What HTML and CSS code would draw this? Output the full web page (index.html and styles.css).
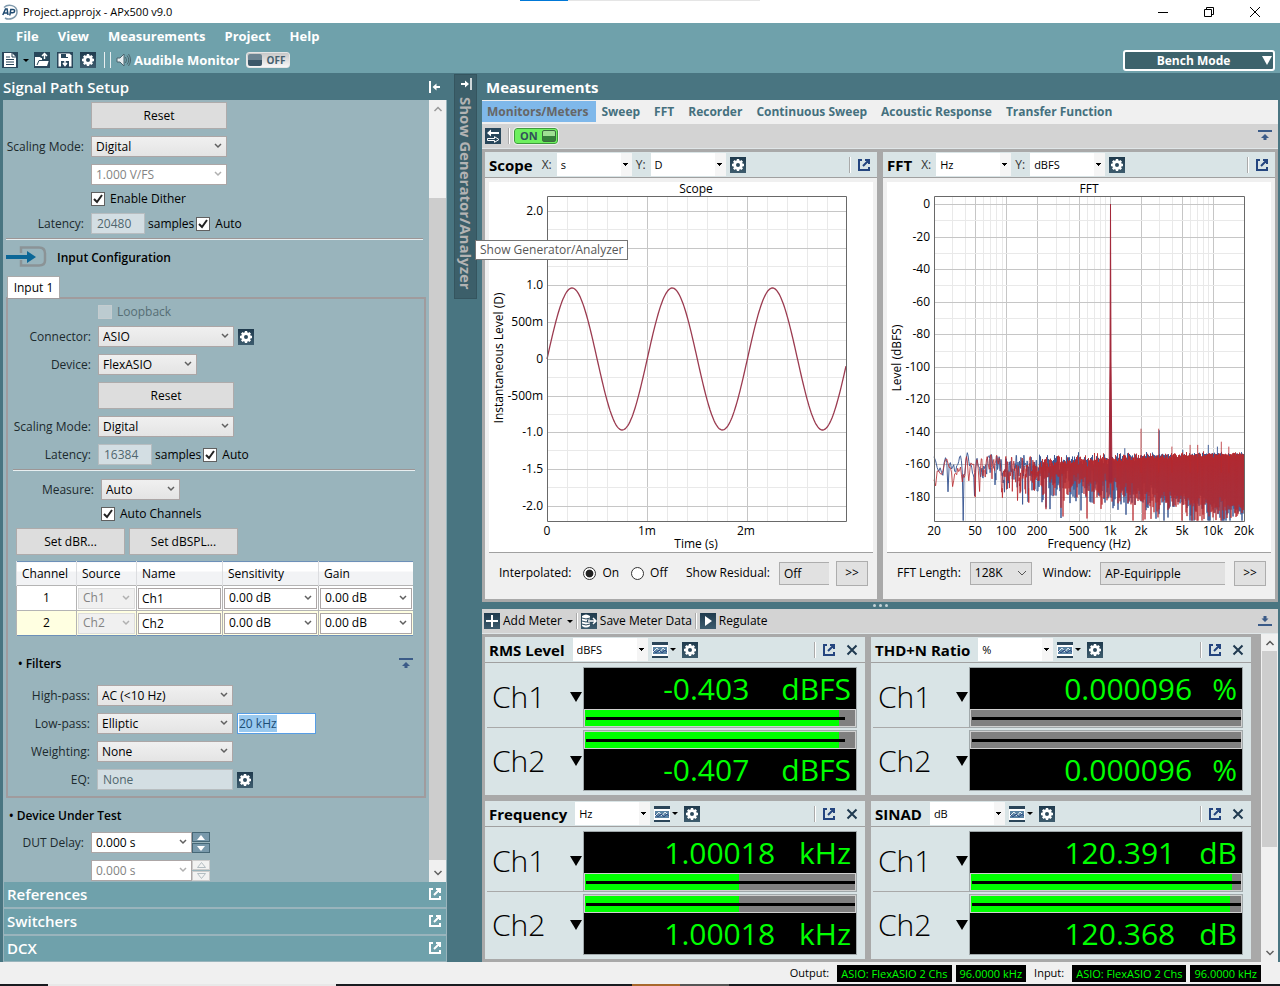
FILE: index.html
```
<!DOCTYPE html>
<html lang="en">
<head>
<meta charset="utf-8">
<title>Project.approjx - APx500 v9.0</title>
<link rel="stylesheet" href="styles.css">
</head>
<body>
<svg class="defs" aria-hidden="true">
  <defs>
    <linearGradient id="dark" x1="0" y1="0" x2="0" y2="1"><stop offset="0" stop-color="#1f3a4d"/><stop offset="1" stop-color="#3d5c6e"/></linearGradient>
    <symbol id="gear" viewBox="0 0 16 16">
      <rect width="16" height="16" fill="url(#dark)"/>
      <circle cx="8" cy="8" r="3.4" fill="none" stroke="#fff" stroke-width="2.8"/>
      <path d="M8 2v2M8 12v2M2 8h2M12 8h2M3.8 3.8l1.4 1.4M10.8 10.8l1.4 1.4M12.2 3.8l-1.4 1.4M5.2 10.8l-1.4 1.4" stroke="#fff" stroke-width="2.4"/>
    </symbol>
    <symbol id="popout" viewBox="0 0 14 14"><path d="M5 2H2v10h10V9M8 2h4v4M12 2L6 8" fill="none" stroke="currentColor" stroke-width="2"/></symbol>
    <symbol id="up" viewBox="0 0 14 12"><path d="M0 0h14v2H0zM7 4l4 4H8.500v2h-3V8H3z" fill="#3b5b88"/></symbol>
    <symbol id="down" viewBox="0 0 14 12"><path d="M0 9h14v2H0zM7 7L3.500 3.500H5.500V1h3v2.500h2z" fill="#3b5b88"/></symbol>
    <symbol id="wave" viewBox="0 0 16 16"><rect width="16" height="16" fill="#2a4559"/><rect x="0" y="3" width="16" height="11" fill="#fff"/><rect x="1" y="5" width="14" height="7" fill="#5a83a3"/><path d="M1 10l4-4 3 4 3-4 4 4" fill="none" stroke="#e6eef4"/><path d="M1 8l3 3 3-3 3 3 3-3 2 2" fill="none" stroke="#334f86"/></symbol>
    <symbol id="close" viewBox="0 0 12 12"><path d="M1.500 1.500l9 9M10.500 1.500l-9 9" stroke="#203a50" stroke-width="2" fill="none"/></symbol>
    <symbol id="chev" viewBox="0 0 10 10"><path d="M1.500 3L5 6.500 8.500 3" fill="none" stroke="#606060" stroke-width="1.500"/></symbol>
  </defs>
</svg>
<div class="app">
  <header class="titlebar">
    <svg class="logo" viewBox="0 0 16 16"><path d="M2 3.500C6-.5 15 1 15 8c0 6-8 8.500-12 6" fill="none" stroke="#7f99ac" stroke-width="1.500"/><path d="M.8 11L3.500 5h1.600L6 11M2 9h4" fill="none" stroke="#1f4a70" stroke-width="1.500"/><path d="M7.800 11.500L8.800 5.500h2.200c2.500 0 2 3.300-.4 3.300H8.500" fill="none" stroke="#1f4a70" stroke-width="1.500"/></svg>
    <span class="title-text">Project.approjx - APx500 v9.0</span>
    <i class="load"></i>
    <div class="winbtns">
      <button aria-label="Minimize"><svg width="12" height="12"><path d="M1 6.500h10" stroke="#000"/></svg></button>
      <button aria-label="Restore"><svg width="12" height="12" fill="none" stroke="#000"><path d="M1.500 3.500h7v7h-7zM3.500 3V1.500h7v7H9"/></svg></button>
      <button aria-label="Close"><svg width="12" height="12" stroke="#000"><path d="M1 1l10 10M11 1L1 11"/></svg></button>
    </div>
  </header>
  <div class="topbar">
    <div class="topleft">
      <nav class="menu"><button>File</button><button>View</button><button>Measurements</button><button>Project</button><button>Help</button></nav>
      <div class="tools">
        <button aria-label="New"><svg width="16" height="16"><rect width="16" height="16" fill="#28465a"/><path d="M2 1h8l4 4v10H2z" fill="#fff"/><path d="M10 1v4h4M4 5h4M4 7.500h8M4 10h8M4 12.500h8" stroke="#28465a" fill="none"/></svg></button>
        <i class="caret"></i>
        <button aria-label="Open"><svg width="16" height="16"><rect width="16" height="16" fill="#28465a"/><path d="M1 14V5h5l1 1h1v2h7l-2 6z" fill="#fff"/><path d="M3 13l2-4.500h10" stroke="#28465a" fill="none"/><path d="M10.500 7V2M8 4l2.500-2.500L13 4" stroke="#fff" stroke-width="1.500" fill="none"/></svg></button>
        <button aria-label="Save"><svg width="16" height="16"><rect width="16" height="16" fill="#28465a"/><path d="M1.500 1.500h11l2 2v11h-13z" fill="#fff"/><path d="M4 2h7v4H4zM4 9h8v6H4z" fill="#28465a"/><path d="M9 2h2v3H9z" fill="#fff"/><path d="M8 9v4M6 11l2 2.500 2-2.500" stroke="#fff" fill="none" stroke-width="1.500"/></svg></button>
        <button aria-label="Settings"><svg width="16" height="16"><use href="#gear"/></svg></button>
        <i class="bars"></i>
        <svg width="15" height="14"><path d="M1 5h3l4-4v12L4 9H1z" fill="#e8eef0" stroke="#4b646e"/><path d="M9.500 4q2 3 0 6M11 2.500q3.500 4.500 0 9M12.500 1q4 6 0 12" fill="none" stroke="#4d656d"/></svg>
        <span class="audible">Audible Monitor</span>
        <button class="toggle off"><i></i>OFF</button>
      </div>
    </div>
    <button class="bench"><span>Bench Mode</span><i></i></button>
  </div>

  <main class="work">
    <aside class="side">
      <div class="sidehead"><h2>Signal Path Setup</h2><svg width="12" height="12"><path d="M1 0v12" stroke="#fff" stroke-width="2"/><path d="M3.500 6l4-3.500V5H11v2H7.500v2.500z" fill="#fff"/></svg></div>
      <div class="scroll">
        <div class="form">
          <div class="row"><span class="lab"></span><button class="btn w136">Reset</button></div>
          <div class="row"><label class="lab" for="osm">Scaling Mode:</label><select id="osm" class="sel w136"><option>Digital</option></select></div>
          <div class="row"><span class="lab"></span><select class="sel white dis w136" disabled aria-label="Full scale"><option>1.000 V/FS</option></select></div>
          <div class="row short"><span class="lab"></span><label class="check"><input type="checkbox" checked>Enable Dither</label></div>
          <div class="row"><label class="lab" for="olat">Latency:</label><input id="olat" class="txt ro" value="20480" disabled><span class="unit">samples</span><label class="check"><input type="checkbox" checked>Auto</label></div>
          <hr>
          <div class="cfghead"><svg width="42" height="22"><path d="M15 7V1.500h18q6 0 6 6v7q0 5-6 5H15V14" fill="none" stroke="#8b9396" stroke-width="2.500"/><path d="M0 9h21V5l9 6-9 6v-4H0z" fill="#0b6797"/></svg><h3>Input Configuration</h3></div>
          <button class="tab1">Input 1</button>
          <section class="box">
            <div class="row short"><span class="lab"></span><label class="check dim"><input type="checkbox" disabled>Loopback</label></div>
            <div class="row"><label class="lab" for="con">Connector:</label><select id="con" class="sel w136"><option>ASIO</option></select><button class="ib" aria-label="Connector settings"><svg width="16" height="16"><use href="#gear"/></svg></button></div>
            <div class="row"><label class="lab" for="dev">Device:</label><select id="dev" class="sel w99"><option>FlexASIO</option></select></div>
            <div class="row"><span class="lab"></span><button class="btn w136">Reset</button></div>
            <div class="row"><label class="lab" for="ism">Scaling Mode:</label><select id="ism" class="sel w136"><option>Digital</option></select></div>
            <div class="row"><label class="lab" for="ilat">Latency:</label><input id="ilat" class="txt ro" value="16384" disabled><span class="unit">samples</span><label class="check"><input type="checkbox" checked>Auto</label></div>
            <hr class="in">
            <div class="row wide"><label class="lab" for="mea">Measure:</label><select id="mea" class="sel w79"><option>Auto</option></select></div>
            <div class="row short wide"><span class="lab"></span><label class="check"><input type="checkbox" checked>Auto Channels</label></div>
            <div class="row pair"><button class="btn">Set dBR...</button><button class="btn">Set dBSPL...</button></div>
            <table class="chan">
              <thead><tr><th>Channel</th><th>Source</th><th>Name</th><th>Sensitivity</th><th>Gain</th></tr></thead>
              <tbody>
                <tr><td>1</td><td><select class="sel flat dis" disabled aria-label="Source 1"><option>Ch1</option></select></td><td><input class="txt" value="Ch1" aria-label="Name 1"></td><td><select class="sel white" aria-label="Sensitivity 1"><option>0.00 dB</option></select></td><td><select class="sel white" aria-label="Gain 1"><option>0.00 dB</option></select></td></tr>
                <tr class="cur"><td>2</td><td><select class="sel flat dis" disabled aria-label="Source 2"><option>Ch2</option></select></td><td><input class="txt" value="Ch2" aria-label="Name 2"></td><td><select class="sel white" aria-label="Sensitivity 2"><option>0.00 dB</option></select></td><td><select class="sel white" aria-label="Gain 2"><option>0.00 dB</option></select></td></tr>
              </tbody>
            </table>
            <div class="filthead"><h3>• Filters</h3><svg width="14" height="12"><use href="#up"/></svg></div>
            <div class="row filt"><label class="lab" for="hp">High-pass:</label><select id="hp" class="sel w136"><option>AC (&lt;10 Hz)</option></select></div>
            <div class="row filt"><label class="lab" for="lp">Low-pass:</label><select id="lp" class="sel w136"><option>Elliptic</option></select><div class="txt edit" contenteditable="true" role="textbox" aria-label="Low-pass frequency"><mark>20 kHz</mark></div></div>
            <div class="row filt"><label class="lab" for="wt">Weighting:</label><select id="wt" class="sel w136"><option>None</option></select></div>
            <div class="row filt"><label class="lab" for="eq">EQ:</label><input id="eq" class="txt ro w136" value="None" disabled><button class="ib" aria-label="EQ settings"><svg width="16" height="16"><use href="#gear"/></svg></button></div>
          </section>
          <h3 class="dut">• Device Under Test</h3>
          <div class="row"><label class="lab" for="dd">DUT Delay:</label><select id="dd" class="sel white w101"><option>0.000 s</option></select><span class="spin"><button aria-label="Increase"><svg width="8" height="5"><path d="M0 5l4-5 4 5z" fill="#fff"/></svg></button><button aria-label="Decrease"><svg width="8" height="5"><path d="M0 0l4 5 4-5z" fill="#fff"/></svg></button></span></div>
          <div class="row"><span class="lab"></span><select class="sel white dis w101" disabled aria-label="Second delay"><option>0.000 s</option></select><span class="spin off"><button disabled aria-label="Increase"><svg width="9" height="6"><path d="M.5 5.500l4-5 4 5z" fill="none" stroke="#b3bdc2"/></svg></button><button disabled aria-label="Decrease"><svg width="9" height="6"><path d="M.5 .5l4 5 4-5z" fill="none" stroke="#b3bdc2"/></svg></button></span></div>
        </div>
        <div class="sb"><svg width="10" height="10"><path d="M1.500 7L5 3.500 8.500 7" fill="none" stroke="#999" stroke-width="1.500"/></svg><i class="gap"></i><i class="thumb"></i><svg width="10" height="10"><use href="#chev"/></svg></div>
      </div>
      <div class="acc"><button>References<svg width="14" height="14"><use href="#popout"/></svg></button><button>Switchers<svg width="14" height="14"><use href="#popout"/></svg></button><button>DCX<svg width="14" height="14"><use href="#popout"/></svg></button></div>
    </aside>

    <div class="stripcol"><button class="strip"><svg width="12" height="12"><path d="M11 0v12" stroke="#fff" stroke-width="1.500"/><path d="M9 6L5 2.500V5H1v2h4v2.500z" fill="#fff"/></svg><span>Show Generator/Analyzer</span></button><div class="tip" role="tooltip">Show Generator/Analyzer</div></div>

    <section class="meas">
      <h2>Measurements</h2>
      <nav class="tabs"><button class="on">Monitors/Meters</button><button>Sweep</button><button>FFT</button><button>Recorder</button><button>Continuous Sweep</button><button>Acoustic Response</button><button>Transfer Function</button></nav>
      <div class="tbar"><button class="ib" aria-label="Swap"><svg width="16" height="16"><rect width="16" height="16" fill="#28465a"/><path d="M2 5l4-3.500V4h8v2H6v2.500z" fill="#fff"/><path d="M2.500 10.500h7V8.700l4.500 2.800-4.500 2.800v-1.800h-7z" fill="none" stroke="#fff"/></svg></button><i class="vline"></i><button class="toggle on">ON<i></i></button><svg class="right" width="14" height="12"><use href="#up"/></svg></div>
      <div class="plots">
        <article class="panel">
          <div class="ph"><h3>Scope</h3><label for="sx">X:</label><select id="sx" class="unitsel"><option>s</option></select><label for="sy">Y:</label><select id="sy" class="unitsel"><option>D</option></select><button class="ib" aria-label="Scope settings"><svg width="16" height="16"><use href="#gear"/></svg></button><i class="vline right"></i><button class="ib nav" aria-label="Pop out"><svg width="14" height="14"><use href="#popout"/></svg></button></div>
          <svg class="plot" id="scope" viewBox="0 0 384 370"></svg>
          <div class="ctl"><span>Interpolated:</span><label><input type="radio" name="interp" checked>On</label><label><input type="radio" name="interp">Off</label><label class="res" for="resid">Show Residual:</label><input id="resid" class="gray w50" value="Off" readonly><button class="more">&gt;&gt;</button></div>
        </article>
        <article class="panel">
          <div class="ph"><h3>FFT</h3><label for="fx">X:</label><select id="fx" class="unitsel"><option>Hz</option></select><label for="fy">Y:</label><select id="fy" class="unitsel"><option>dBFS</option></select><button class="ib" aria-label="FFT settings"><svg width="16" height="16"><use href="#gear"/></svg></button><i class="vline right"></i><button class="ib nav" aria-label="Pop out"><svg width="14" height="14"><use href="#popout"/></svg></button></div>
          <svg class="plot" id="fft" viewBox="0 0 384 370"></svg>
          <div class="ctl"><label for="fl">FFT Length:</label><select id="fl" class="gray w62"><option>128K</option></select><label for="win">Window:</label><input id="win" class="gray w125" value="AP-Equiripple" readonly><button class="more">&gt;&gt;</button></div>
        </article>
      </div>
      <div class="split"><i></i><i></i><i></i></div>
      <div class="mbar"><button><svg width="16" height="16"><rect width="16" height="16" fill="url(#dark)"/><path d="M8 2v12M2 8h12" stroke="#fff" stroke-width="2"/></svg>Add Meter<i class="caret"></i></button><i class="vline"></i><button><svg width="16" height="16"><rect width="16" height="16" fill="url(#dark)"/><path d="M1 3q4-3 8 0v10q-4 3-8 0z" fill="#fff"/><path d="M1 5q4 2 8 0M1 8q4 2 8 0M1 11q4 2 8 0" stroke="#28465a" fill="none"/><path d="M6 8h9M12 5l3 3-3 3" stroke="#28465a" stroke-width="3" fill="none"/><path d="M7 8h8M12 5l3 3-3 3" stroke="#fff" stroke-width="1.500" fill="none"/></svg>Save Meter Data</button><i class="vline"></i><button><svg width="16" height="16"><rect width="16" height="16" fill="url(#dark)"/><path d="M5 3l7 5-7 5z" fill="#fff"/></svg>Regulate</button><svg class="right" width="14" height="12"><use href="#down"/></svg></div>
      <div class="mwrap"><div class="meters" id="meters"></div>
        <div class="sb msb"><svg width="10" height="10"><path d="M1.500 7L5 3.500 8.500 7" fill="none" stroke="#555" stroke-width="1.500"/></svg><i class="mthumb"></i><svg width="10" height="10"><use href="#chev"/></svg></div></div>
    </section>
  </main>
  <footer class="status"><span>Output:</span><b>ASIO: FlexASIO 2 Chs</b><b>96.0000 kHz</b><span>Input:</span><b>ASIO: FlexASIO 2 Chs</b><b>96.0000 kHz</b></footer>
  <div class="task"><i class="t1"></i><i class="t2"></i><i class="t3"></i><i class="t4"></i><i class="t5"></i></div>
</div>
<script src="app.js"></script>
</body>
</html>
```
FILE: styles.css
```
* { box-sizing: border-box; }
body { margin: 0; font: 12px/16px "Open Sans", "Noto Sans", sans-serif; color: #000; }
button, input, select { font: inherit; color: inherit; margin: 0; }
button { padding: 0; border: 0; background: none; }
h2, h3 { margin: 0; font-weight: 600; }
h3 { font-size: 12px; }
svg { display: block; flex: none; }
select { appearance: none; }
.defs { position: absolute; width: 0; height: 0; }
.app { height: 100vh; display: flex; flex-direction: column; background: #497581; overflow: hidden; }
.right { margin-left: auto; }

.titlebar { height: 23px; background: #fff; display: flex; align-items: center; padding-left: 2px; gap: 5px; position: relative; flex: none; }
.logo { width: 16px; height: 16px; }
.load { position: absolute; top: 0; left: 520px; right: 520px; height: 1px; background: linear-gradient(90deg, #0078d7 48px, #e5e5e5 48px); }
.title-text { font-size: 11px; }
.winbtns { margin-left: auto; margin-right: 2px; display: flex; }
.winbtns button { width: 46px; height: 22px; display: grid; place-items: center; }

.topbar { height: 50px; background: #6fa1ab; display: flex; justify-content: space-between; align-items: flex-end; flex: none; }
.menu { display: flex; height: 26px; align-items: center; gap: 19px; padding-left: 16px; color: #fff; font-size: 13px; font-weight: 700; }
.tools { display: flex; height: 24px; align-items: center; gap: 7px; padding: 0 0 2px 2px; }
.caret { border: 3px solid transparent; border-top-color: #000; border-bottom: 0; }
.tools .caret { margin: 0 -2px; }
.bars { width: 7px; height: 16px; border: solid #e8eef0; border-width: 0 1px; margin: 0 -2px 0 1px; }
.audible { color: #fff; font-weight: 700; font-size: 13px; margin-left: -4px; }
.toggle { display: flex; align-items: center; justify-content: space-between; height: 16px; width: 44px; border-radius: 3px; border: 1px solid #e6e6e6; font-weight: 700; font-size: 10px; color: #45606e; padding: 0 4px 0 1px; background: linear-gradient(#c8c8c8, #f7f7f7); }
.toggle i { width: 14px; height: 12px; border-radius: 2px; background: linear-gradient(#6c8492 50%, #3c5768 50%); }
.toggle.on { background: #6ef05f; border-color: #3f9a3d; outline: 1px solid #eee; padding: 0 1px 0 5px; font-size: 11px; color: #32505a; }
.toggle.on i { background: linear-gradient(#9fe093 50%, #35803a 50%); border: 1px solid #3c6b3f; }
.bench { width: 152px; height: 21px; margin: 0 5px 2px 0; background: #3d636c; border: 2px solid #fff; border-radius: 3px; color: #fff; font-weight: 700; display: flex; align-items: center; padding-right: 1px; }
.bench span { flex: 1; }
.bench i { border: 5px solid transparent; border-top: 9px solid #fff; border-bottom: 0; }

.work { flex: 1; min-height: 0; display: grid; grid-template-columns: 447px 35px minmax(0, 1fr); padding-right: 2px; }
.side { display: flex; flex-direction: column; min-height: 0; padding-left: 3px; }
.sidehead { height: 27px; flex: none; display: flex; align-items: center; justify-content: space-between; padding-right: 6px; color: #fff; }
h2 { font-size: 15px; line-height: 28px; color: #fff; font-weight: 600; }
.scroll { flex: 1; min-height: 0; display: flex; background: #99b4bc; overflow: hidden; padding-right: 1px; }
.form { flex: 1; padding: 2px 3px 0 0; display: flex; flex-direction: column; gap: 7px; }
.row { display: flex; align-items: center; flex: none; }
.row.short { height: 14px; }
.lab { width: 81px; text-align: right; margin-right: 7px; white-space: nowrap; flex: none; display: flex; justify-content: flex-end; color: #1c2a2e; }
.box .lab { width: 83px; }
.box .wide .lab { width: 86px; }
.box .filt .lab { width: 82px; }
.btn { height: 27px; background: #ddd; border: 1px solid #aeabab; }
.w136 { width: 136px; } .w99 { width: 99px; } .w79 { width: 79px; } .w101 { width: 101px; }
.sel { height: 21px; border: 1px solid #aca6a6; border-radius: 0; padding: 0 4px; background: url("data:image/svg+xml,%3Csvg xmlns='http://www.w3.org/2000/svg' width='8' height='6'%3E%3Cpath d='M1 1l3 3 3-3' fill='none' stroke='%23606060' stroke-width='1.500'/%3E%3C/svg%3E") no-repeat right 4px top 6px, linear-gradient(#f0f0f0, #e4e4e4); }
.sel.white { background-image: url("data:image/svg+xml,%3Csvg xmlns='http://www.w3.org/2000/svg' width='8' height='6'%3E%3Cpath d='M1 1l3 3 3-3' fill='none' stroke='%23606060' stroke-width='1.500'/%3E%3C/svg%3E"), linear-gradient(#fff, #fff); }
.sel.dis { color: #838383; opacity: 1; background-image: url("data:image/svg+xml,%3Csvg xmlns='http://www.w3.org/2000/svg' width='8' height='6'%3E%3Cpath d='M1 1l3 3 3-3' fill='none' stroke='%23b0b0b0' stroke-width='1.500'/%3E%3C/svg%3E"), linear-gradient(#fff, #fff); }
.sel.flat.dis { background-image: url("data:image/svg+xml,%3Csvg xmlns='http://www.w3.org/2000/svg' width='8' height='6'%3E%3Cpath d='M1 1l3 3 3-3' fill='none' stroke='%23b0b0b0' stroke-width='1.500'/%3E%3C/svg%3E"), linear-gradient(#f0f0f0, #f0f0f0); border-color: #ddd; }
.txt { height: 21px; border: 1px solid #aca6a6; background: #fff; padding: 0 5px; width: 54px; }
.txt.ro { background: #d3dee3; color: #50666e; border-color: #b7bdc0; }
.txt.ro.w136 { width: 136px; }
.unit { margin: 0 2px 0 3px; }
.check { display: flex; align-items: center; gap: 5px; }
.check input { appearance: none; width: 14px; height: 14px; border: 1px solid #606060; background: #fff; }
.check input:checked { background: #fff url("data:image/svg+xml,%3Csvg xmlns='http://www.w3.org/2000/svg' width='12' height='12'%3E%3Cpath d='M2 6l3 3 5-7' fill='none' stroke='%23222' stroke-width='2'/%3E%3C/svg%3E") no-repeat center; }
.check.dim { color: #566e75; }
.check.dim input { background: #bccbd0; border-color: #c4cccf; }
hr { margin: -3px 3px -3px 3px; border: 0; height: 2px; flex: none; background: linear-gradient(#9d9696 50%, #e8eff1 50%); }
hr.in { margin: -3px 9px 1px 5px; }
.cfghead { display: flex; align-items: center; gap: 9px; height: 20px; margin-left: 3px; padding-top: 8px; flex: none; }
.cfghead svg { margin-top: -2px; }
.tab1 { width: 53px; height: 22px; background: #fff; border: 1px solid #aaa; border-bottom: 0; margin: 5px 0 -8px 4px; flex: none; position: relative; z-index: 1; }
.box { border: 2px solid #a09b9d; margin-left: 3px; padding: 6px 0; display: flex; flex-direction: column; gap: 7px; flex: none; }
.ib { display: grid; place-items: center; width: 16px; height: 16px; flex: none; }
.row .ib { margin-left: 4px; }
.pair { padding-left: 8px; gap: 4px; }
.pair .btn { width: 109px; }
.chan { margin: -1px 11px 0 8px; border-collapse: collapse; table-layout: fixed; background: #fff; border: 1px solid #6d90b8; border-right: 0; }
.chan th { height: 24px; font-weight: 400; text-align: left; padding: 0 5px; background: linear-gradient(#fff 40%, #f2f3f5 40%); border-left: 1px solid #dcdde0; white-space: nowrap; }
.chan td { height: 25px; padding: 1px; border: solid #b4b4b4; border-width: 1px 0 0 1px; text-align: center; }
.chan th:nth-child(1) { width: 60px; } .chan th:nth-child(2) { width: 60px; } .chan th:nth-child(3) { width: 86px; } .chan th:nth-child(4) { width: 96px; }
.chan td .sel, .chan td .txt { width: 100%; display: block; }
.chan td .txt { padding: 0 3px; }
.cur td { background: #ffffe1; }
.filthead { display: flex; justify-content: space-between; align-items: center; padding: 0 11px 0 10px; height: 20px; margin: 11px 0 4px; }
.edit { width: 79px; border-color: #569de5; margin-left: 4px; padding: 2px 1px; line-height: 15px; }
.edit mark { background: #99c9ef; color: #1d4d75; }
.dut { padding-left: 6px; height: 16px; margin: 3px 0 1px; }
.spin { display: flex; flex-direction: column; width: 18px; height: 21px; gap: 1px; }
.spin button { flex: 1; border: 1px solid #456776; background: #7899ab; display: grid; place-items: center; }
.spin.off button { background: #f2f2f2; border-color: #ccc; }
.sb { width: 17px; background: #f0f0f0; display: flex; flex-direction: column; align-items: center; padding: 4px 0; flex: none; }
.sb .gap { height: 84px; flex: none; }
.sb .thumb { flex: 1; width: 17px; background: #cdcdcd; margin-bottom: 8px; }
.acc { display: flex; flex-direction: column; gap: 2px; background: #99b4bc; padding: 0 1px 1px; flex: none; }
.acc button { height: 25px; background: #6fa1ab; color: #fff; font-size: 15px; font-weight: 600; display: flex; justify-content: space-between; align-items: center; padding: 0 4px 2px 3px; }

.stripcol { position: relative; padding: 1px 0 0 7px; }
.strip { width: 23px; height: 225px; background: #3c5f6a; border: 1px solid #35555f; display: flex; flex-direction: column; align-items: center; gap: 7px; padding-top: 3px; color: #b3b3b3; }
.strip span { writing-mode: vertical-rl; font-size: 15px; font-weight: 700; line-height: 18px; white-space: nowrap; }
.tip { position: absolute; left: 28px; top: 167px; z-index: 2; background: #fff; border: 1px solid #767676; color: #575757; padding: 1px 4px; white-space: nowrap; }

.meas { display: flex; flex-direction: column; min-width: 0; min-height: 0; }
.meas > h2 { padding-left: 4px; font-weight: 700; height: 27px; flex: none; }
.tabs { height: 24px; background: #f0f0f0; display: flex; color: #45707e; font-weight: 700; padding-top: 1px; flex: none; }
.tabs button { padding: 0 7px; height: 21px; white-space: nowrap; }
.tabs .on { background: #7fb8ea; color: #666; padding: 0 8px 0 5px; margin-right: -2px; }
.tbar, .mbar { height: 25px; background: #d3d3d3; display: flex; align-items: center; padding: 0 6px 0 3px; gap: 7px; border-bottom: 1px solid #e0e6e8; flex: none; }
.vline { width: 2px; height: 16px; background: linear-gradient(90deg, #aaa 50%, #fff 50%); flex: none; }
.vline.right { margin-left: auto; }
.tbar .vline { margin-right: -3px; }
.plots { display: grid; grid-template-columns: 1fr 1fr; gap: 6px; padding: 3px; background: #a9a9a9; flex: none; }
.panel { background: #f0f0f0; display: flex; flex-direction: column; min-width: 0; }
.ph { background: #d9e4e6; height: 26px; display: flex; align-items: center; padding: 0 6px 0 4px; border-bottom: 1px solid #a0a0a0; }
.ph h3 { font-size: 15px; font-weight: 700; white-space: nowrap; }
.ph label { margin: 0 5px 0 9px; color: #333; }
.ph .unitsel + label { margin-left: 4px; }
.unitsel { width: 75px; height: 23px; border: 0; border-radius: 0; padding: 0 4px; font-size: 11px; background: linear-gradient(#000, #000) no-repeat right 4px top 10px / 5px 1px, linear-gradient(#000, #000) no-repeat right 5px top 11px / 3px 1px, linear-gradient(#000, #000) no-repeat right 6px top 12px / 1px 1px, linear-gradient(90deg, #fff 64px, #f5f5f5 64px); }
.unitsel + .ib { margin-left: 4px; }
.nav { color: #24457f; margin-left: 6px; }
.ph .nav { width: 14px; }
.plot { width: calc(100% - 8px); height: auto; background: #fff; margin: 4px 4px 0; border-bottom: 1px solid #a0a0a0; overflow: visible; }
.plot text { font-size: 12px; fill: #000; }
.ctl { height: 46px; display: flex; align-items: center; padding: 0 9px 6px 14px; white-space: nowrap; }
.ctl label { display: flex; align-items: center; gap: 6px; }
.ctl label:has(input) { margin-left: 12px; }
.ctl input[type=radio] { appearance: none; width: 13px; height: 13px; border: 1px solid #333; border-radius: 50%; background: #fff; }
.ctl input[type=radio]:checked { background: radial-gradient(#222 45%, #fff 55%); }
.ctl .res { margin-left: auto; }
.gray { background: #e1e1e1; border: 1px solid #adadad; border-radius: 0; height: 23px; padding: 0 4px; margin-left: 9px; }
input.gray { border-right: 0; }
select.gray { background: url("data:image/svg+xml,%3Csvg xmlns='http://www.w3.org/2000/svg' width='10' height='7'%3E%3Cpath d='M1 1l4 4 4-4' fill='none' stroke='%23555'/%3E%3C/svg%3E") no-repeat right 4px center #e1e1e1; margin-right: 11px; }
.w50 { width: 50px; } .w62 { width: 62px; } .w125 { width: 125px; }
.more { width: 32px; height: 25px; border: 1px solid #adadad; background: #e1e1e1; margin-left: 7px; }
.ctl #win + .more { margin-left: auto; }
.split { height: 7px; display: flex; gap: 3px; justify-content: center; align-items: center; flex: none; }
.split i { width: 3px; height: 3px; border-radius: 50%; background: #c4d2d6; }
.mbar { padding-left: 2px; gap: 3px; }
.mbar button { display: flex; align-items: center; gap: 3px; }
.mbar .caret { margin-left: 2px; }
.mwrap { flex: 1; min-height: 0; display: flex; background: #a9a9a9; }
.meters { flex: 1; display: grid; grid-template-columns: 1fr 1fr; gap: 6px; padding: 3px 10px 3px 3px; align-content: start; }
.msb { padding: 4px 0; }
.mthumb { width: 15px; flex: 1; background: #cdcdcd; margin: 3px 0 101px; }
.meter { background: #d9e4e6; padding-bottom: 4px; }
.meter .ph { padding-right: 5px; }
.meter .unitsel { margin-left: 8px; }
.meter .caret { margin: 0 6px 0 2px; }
.meter .x { margin-left: 8px; }
.rows { padding: 4px 8px 0 2px; display: grid; gap: 2px; }
.ch { display: grid; grid-template-columns: 96px 1fr; }
.name { display: flex; align-items: center; justify-content: space-between; padding: 0 1px 0 5px; font-size: 30px; line-height: 60px; font-weight: 300; }
.ch:first-child .name { border-bottom: 1px solid #a9a9a9; }
.name i { border: 6px solid transparent; border-top: 10px solid #000; border-bottom: 0; }
.disp { background: #000; border: 1px solid #a0a8aa; display: flex; flex-direction: column; color: #0f0; height: 61px; }
.ch:last-child .disp { flex-direction: column-reverse; }
.val { flex: 1; display: flex; justify-content: flex-end; align-items: center; gap: 24px; font-size: 30px; line-height: 40px; padding-right: 5px; }
.val.far { gap: 32px; }
.val.tight { gap: 20px; }
.bar { height: 18px; border: 1px solid #d0d0d0; background: #808080; position: relative; }
.bar i { display: block; height: 100%; background: #0f0; }
.bar b { position: absolute; left: 1px; top: 7px; height: 3px; background: #000; }

.status { height: 22px; background: #f0f0f0; display: flex; justify-content: flex-end; align-items: center; gap: 4px; padding-right: 19px; flex: none; font-size: 11px; }
.status span { margin: 0 4px; }
.status b { font-weight: 400; background: #000; color: #0f0; padding: 0 4px; line-height: 17px; }
.task { height: 2px; display: flex; background: #181b20; flex: none; }
.t1 { width: 48px; } .t2 { width: 288px; background: #e8e8e8; } .t3 { width: 296px; } .t4 { width: 48px; background: #a8682c; } .t5 { width: 49px; background: #555; }
```
FILE: app.js
```
const NS = 'http://www.w3.org/2000/svg';
function add(svg, tag, attrs, text) {
  const el = document.createElementNS(NS, tag);
  for (const k in attrs) el.setAttribute(k, attrs[k]);
  if (text !== undefined) el.textContent = text;
  svg.appendChild(el);
  return el;
}
function line(svg, d, major) {
  add(svg, 'path', { d, stroke: major ? '#c6c6c6' : '#e9e9e9', fill: 'none' });
}
const T = 14, B = 340;

// Oscilloscope: three periods of a sine
(function () {
  const s = document.getElementById('scope'), L = 58, R = 358;
  for (let i = 1; i < 15; i++) { const x = L + i * 20 + 0.5; line(s, `M${x} ${T}V${B}`, i % 5 === 0); }
  const labels = ['2.0', '1.5', '1.0', '500m', '0', '-500m', '-1.0', '-1.5', '-2.0'];
  labels.forEach((t, i) => {
    const y = Math.round(29 + i * 36.9);
    line(s, `M${L} ${y + 0.5}H${R}`, true);
    if (i < 8) line(s, `M${L} ${y + 18.5}H${R}`, false);
    add(s, 'text', { x: 54, y: y + 4, 'text-anchor': 'end' }, t);
  });
  let d = '';
  for (let x = 0; x <= 299; x++) d += (x ? 'L' : 'M') + (L + x) + ' ' + (177 - 71 * Math.sin(x * 2 * Math.PI / 100.2)).toFixed(1);
  add(s, 'path', { d, fill: 'none', stroke: '#9b3b50', 'stroke-width': 1.3 });
  add(s, 'path', { d: `M${L}.5 ${T}.5H${R - 1}.5V${B - 1}.5H${L}.5z`, fill: 'none', stroke: '#696969' });
  add(s, 'text', { x: 207, y: 11, 'text-anchor': 'middle' }, 'Scope');
  [['0', 58], ['1m', 158], ['2m', 257]].forEach(([t, x]) => add(s, 'text', { x, y: 353, 'text-anchor': 'middle' }, t));
  add(s, 'text', { x: 207, y: 366, 'text-anchor': 'middle' }, 'Time (s)');
  add(s, 'text', { transform: 'translate(14 176) rotate(-90)', 'text-anchor': 'middle' }, 'Instantaneous Level (D)');
})();

// Spectrum: log frequency axis, noise floor built from individual FFT bins
(function () {
  const s = document.getElementById('fft'), L = 47, R = 357;
  const fx = f => L + 103.4 * Math.log10(f / 20), dy = v => 22 - v * 1.628;
  for (let dec = 10; dec <= 10000; dec *= 10)
    for (let m = 1; m < 10; m++) {
      const f = dec * m;
      if (f > 20 && f < 20000) { const x = Math.round(fx(f)) + 0.5; line(s, `M${x} ${T}V${B}`, m === 1 || m === 2 || m === 5); }
    }
  for (let v = 0; v >= -190; v -= 10) line(s, `M${L} ${Math.round(dy(v)) + 0.5}H${R}`, v % 20 === 0);
  for (let v = 0; v >= -180; v -= 20) add(s, 'text', { x: 43, y: Math.round(dy(v)) + 4, 'text-anchor': 'end' }, String(v));
  let seed = 7;
  const rnd = () => { seed = (seed * 1664525 + 1013904223) >>> 0; return (seed + 1) / 4294967297; };
  const gauss = () => Math.sqrt(-2 * Math.log(rnd())) * Math.cos(2 * Math.PI * rnd());
  const taps = [0.25, 0.75, 1, 0.75, 0.25];
  function trace(color, opacity, spurs) {
    const df = 96000 / 131072, cols = new Map();
    const re = taps.map(gauss), im = taps.map(gauss);
    let d = '';
    for (let f = 20; f < 20000; f += df) {
      re.shift(); re.push(gauss()); im.shift(); im.push(gauss());
      let a = 0, b = 0;
      taps.forEach((t, i) => { a += re[i] * t; b += im[i] * t; });
      let v = -161 + 10 * Math.log10((a * a + b * b) / 4.5);
      v = Math.max(-194.5, Math.min(v, -153.5 + gauss() * 0.8));
      const x = fx(f);
      if (f < 200) d += (d ? 'L' : 'M') + x.toFixed(1) + ' ' + dy(v).toFixed(1);
      else {
        const key = Math.round(x), c = cols.get(key) || [v, v];
        cols.set(key, [Math.min(c[0], v), Math.max(c[1], v)]);
      }
    }
    for (const [x, c] of cols) d += `L${x} ${dy(c[0]).toFixed(1)}L${x + 0.5} ${dy(c[1]).toFixed(1)}`;
    for (const [f, v] of spurs) d += `M${fx(f).toFixed(1)} ${dy(v).toFixed(1)}V${dy(-165)}`;
    add(s, 'path', { d, fill: 'none', stroke: color, 'stroke-opacity': opacity, 'stroke-width': 1 });
  }
  trace('#3b5894', 0.95, [[3020, -139], [1400, -150], [9000, -148], [11000, -149], [5100, -151]]);
  trace('#b8282d', 0.8, [[2010, -138], [2980, -138], [4000, -149], [6000, -148], [7100, -148], [12000, -146], [14200, -149]]);
  add(s, 'path', { d: 'M222 300L223 180L223.500 22L224 180L225 300z', fill: '#a3283a', stroke: '#a3283a', 'stroke-width': 1 });
  add(s, 'path', { d: `M${L}.5 ${T}.5H${R}.5V${B - 1}.5H${L}.5z`, fill: 'none', stroke: '#696969' });
  add(s, 'text', { x: 202, y: 11, 'text-anchor': 'middle' }, 'FFT');
  [[20, '20'], [50, '50'], [100, '100'], [200, '200'], [500, '500'], [1000, '1k'], [2000, '2k'], [5000, '5k'], [10000, '10k'], [20000, '20k']]
    .forEach(([f, t]) => add(s, 'text', { x: Math.round(fx(f)), y: 353, 'text-anchor': 'middle' }, t));
  add(s, 'text', { x: 202, y: 366, 'text-anchor': 'middle' }, 'Frequency (Hz)');
  add(s, 'text', { transform: 'translate(14 176) rotate(-90)', 'text-anchor': 'middle' }, 'Level (dBFS)');
})();

// Meters
const meters = [
  { t: 'RMS Level', sel: 'dBFS', u: 'dBFS', v: ['-0.403', '-0.407'], bar: [94, 94], peak: 96, gap: 'far' },
  { t: 'THD+N Ratio', sel: '%', u: '%', v: ['0.000096', '0.000096'], bar: [0, 0], peak: 99.5, gap: 'tight' },
  { t: 'Frequency', sel: 'Hz', u: 'kHz', v: ['1.00018', '1.00018'], bar: [57, 57], peak: 99.5, gap: '' },
  { t: 'SINAD', sel: 'dB', u: 'dB', v: ['120.391', '120.368'], bar: [96.5, 96], peak: 99.5, gap: '' }
];
document.getElementById('meters').innerHTML = meters.map(m => `
  <article class="meter">
    <div class="ph"><h3>${m.t}</h3><select class="unitsel" aria-label="${m.t} unit"><option>${m.sel}</option></select>
      <button class="ib" aria-label="Display"><svg width="16" height="16"><use href="#wave"/></svg></button><i class="caret"></i>
      <button class="ib" aria-label="Settings"><svg width="16" height="16"><use href="#gear"/></svg></button>
      <i class="vline right"></i><button class="ib nav" aria-label="Pop out"><svg width="14" height="14"><use href="#popout"/></svg></button>
      <button class="ib x" aria-label="Close"><svg width="12" height="12"><use href="#close"/></svg></button></div>
    <div class="rows">${[0, 1].map(i => `
      <div class="ch"><div class="name">Ch${i + 1}<i></i></div><div class="disp">
        <div class="val ${m.gap}"><span>${m.v[i]}</span><span>${m.u}</span></div>
        <div class="bar"><i style="width:${m.bar[i]}%"></i><b style="width:${m.peak}%"></b></div></div></div>`).join('')}
    </div>
  </article>`).join('');
```
